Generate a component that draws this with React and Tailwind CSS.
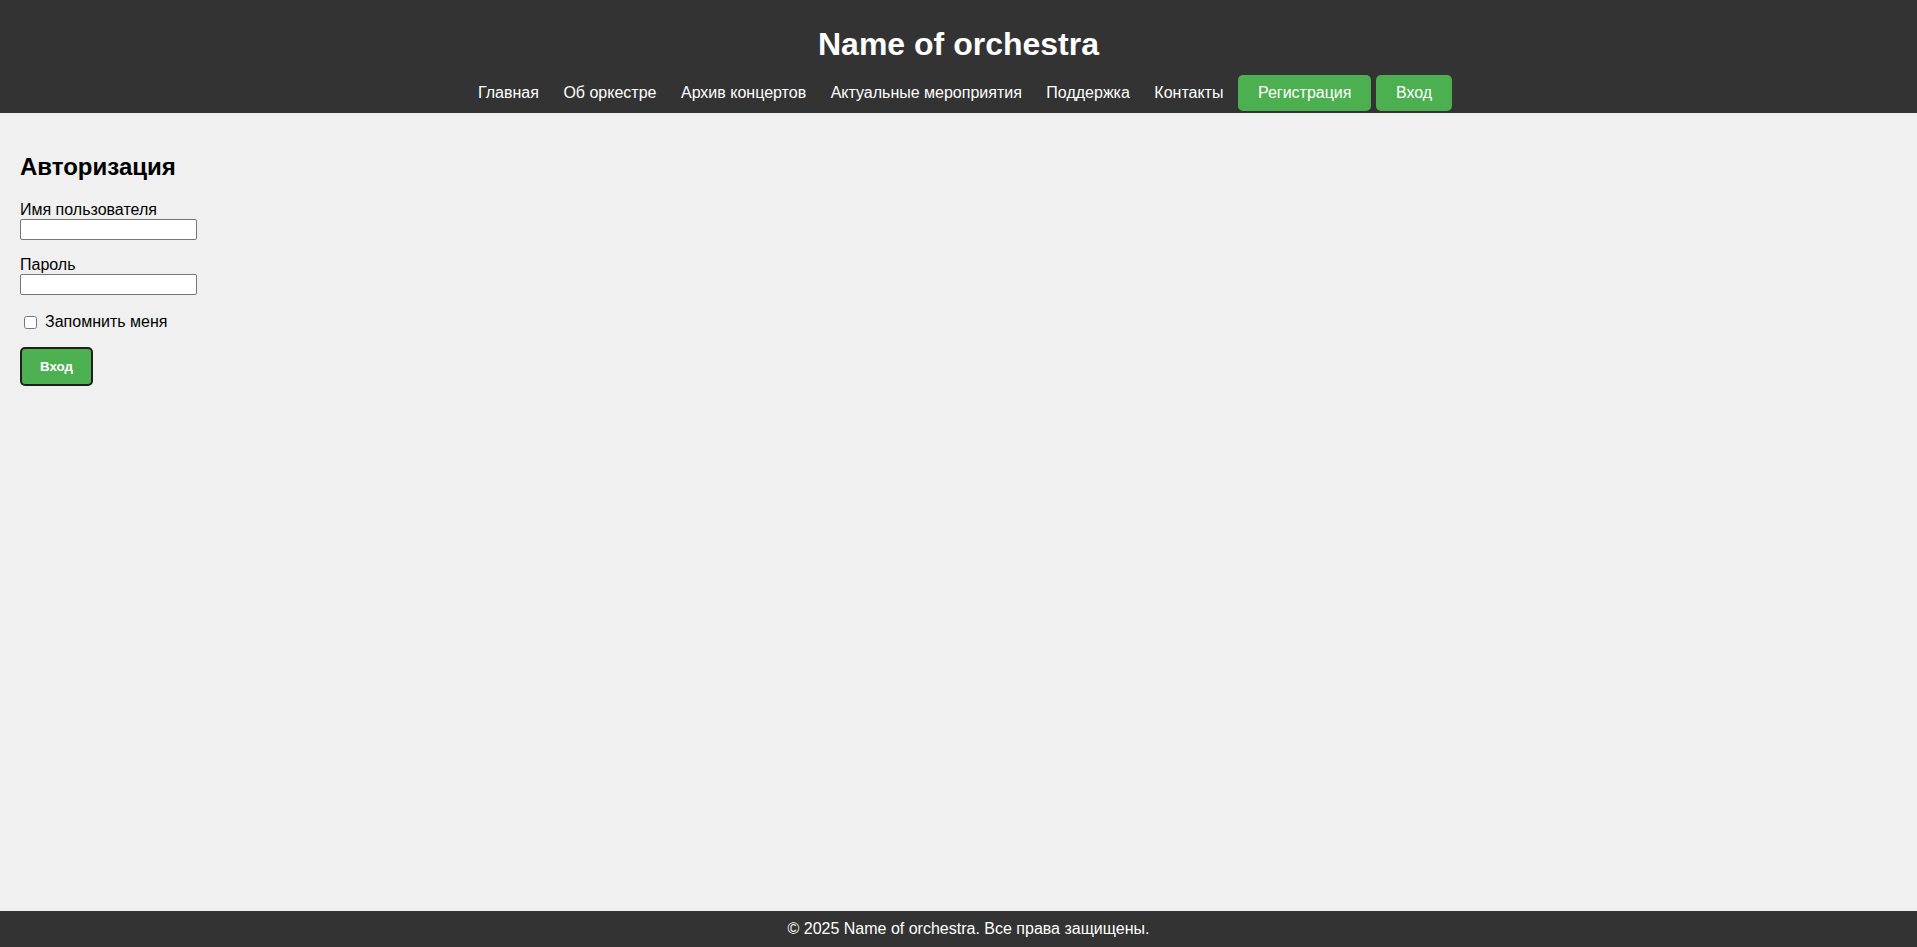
import React from "react";

const links = [
  "Главная",
  "Об оркестре",
  "Архив концертов",
  "Актуальные мероприятия",
  "Поддержка",
  "Контакты",
];

function Header() {
  return (
    <header className="bg-[#333333] text-white pt-[26px] pb-[2px]">
      <h1 className="text-center text-[32px] leading-[37px] font-bold">Name of orchestra</h1>
      <nav className="mt-[12px] flex items-center gap-[4.5px] pl-[468px]">
        {links.map((l) => (
          <a key={l} href="#" className="px-[10px] h-[36px] flex items-center text-[16px] text-white">
            {l}
          </a>
        ))}
        <a href="#" className="px-[20px] h-[36px] flex items-center rounded-[5px] bg-[#4CAF50] text-white text-[16px]">
          Регистрация
        </a>
        <a href="#" className="px-[20px] h-[36px] flex items-center rounded-[5px] bg-[#4CAF50] text-white text-[16px]">
          Вход
        </a>
      </nav>
    </header>
  );
}

function LoginForm() {
  return (
    <main className="flex-1 px-[20px] pt-[40px] text-black">
      <h2 className="text-[24px] leading-[28px] font-bold">Авторизация</h2>
      <form className="mt-[19px]">
        <label className="block text-[16px] leading-[19px]">Имя пользователя</label>
        <input type="text" className="block w-[177px] h-[21px] bg-white border border-[#767676] rounded-[2px] px-[2px] text-[13px]" />
        <label className="block mt-[15px] text-[16px] leading-[19px]">Пароль</label>
        <input type="password" className="block w-[177px] h-[21px] bg-white border border-[#767676] rounded-[2px] px-[2px] text-[13px]" />
        <div className="mt-[18px] flex items-center h-[18px] text-[16px]">
          <input type="checkbox" className="ml-[4px] mr-[8px] w-[13px] h-[13px]" />
          <span>Запомнить меня</span>
        </div>
        <button
          type="button"
          className="mt-[16px] w-[73px] h-[39px] bg-[#4CAF50] text-white text-[13.33px] font-bold border-2 border-[#1f1f1f] rounded-[5px] flex items-center justify-center"
        >
          Вход
        </button>
      </form>
    </main>
  );
}

export default function App() {
  return (
    <div className="h-[947px] flex flex-col bg-[#f0f0f0]" style={{ fontFamily: '"Liberation Sans", Arial, sans-serif' }}>
      <Header />
      <LoginForm />
      <footer className="h-[36px] bg-[#333333] text-white text-[16px] flex items-center justify-center pl-[20px]">
        © 2025 Name of orchestra. Все права защищены.
      </footer>
    </div>
  );
}
